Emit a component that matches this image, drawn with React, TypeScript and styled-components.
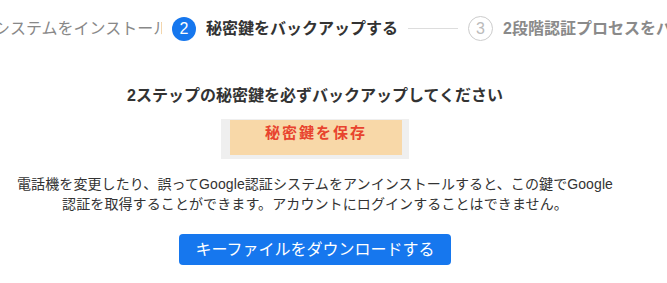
import React from "react";
import styled, { createGlobalStyle } from "styled-components";

const GlobalStyle = createGlobalStyle`
  html, body {
    margin: 0;
    padding: 0;
    background: #ffffff;
  }
  body {
    font-family: "Liberation Sans", "Noto Sans CJK JP", sans-serif;
    color: #333333;
  }
`;

const Page = styled.div`
  width: 667px;
  height: 283px;
  overflow: hidden;
  display: flex;
  flex-direction: column;
`;

const Stepper = styled.div`
  width: 100%;
  overflow: hidden;
  padding-top: 16px;
`;

const Track = styled.div<{ $offset: number }>`
  display: flex;
  align-items: center;
  gap: 10px;
  margin-left: ${(p) => -p.$offset}px;
  white-space: nowrap;
`;

const Step = styled.div`
  display: flex;
  align-items: center;
  gap: 10px;
  flex-shrink: 0;
`;

const Circle = styled.div<{ $state: "done" | "active" | "todo" }>`
  box-sizing: border-box;
  width: ${(p) => (p.$state === "todo" ? 25 : 24)}px;
  height: ${(p) => (p.$state === "todo" ? 25 : 24)}px;
  border-radius: 50%;
  display: flex;
  align-items: center;
  justify-content: center;
  font-size: 16px;
  line-height: 1;
  flex-shrink: 0;
  background: ${(p) => (p.$state === "active" ? "#1677ee" : "#ffffff")};
  color: ${(p) => (p.$state === "active" ? "#ffffff" : "#bbbbbb")};
  border: ${(p) => (p.$state === "active" ? "none" : "1px solid #cccccc")};
`;

const Label = styled.div<{ $state: "done" | "active" | "todo"; $clip?: number }>`
  font-size: 16px;
  line-height: 24px;
  white-space: nowrap;
  overflow: hidden;
  ${(p) => (p.$clip ? `width: ${p.$clip}px;` : "")}
  font-weight: ${(p) => (p.$state === "done" ? 400 : 700)};
  color: ${(p) =>
    p.$state === "active" ? "#333333" : p.$state === "done" ? "#888888" : "#8a8a8a"};
`;

const Connector = styled.div`
  width: 50px;
  height: 1px;
  background: #dddddd;
  flex-shrink: 0;
`;

const Content = styled.div`
  width: 630px;
  display: flex;
  flex-direction: column;
  align-items: center;
  text-align: center;
  margin-top: 43px;
`;

const Title = styled.div`
  font-size: 16px;
  line-height: 24px;
  font-weight: 700;
  color: #333333;
`;

const KeyFrame = styled.div`
  margin-top: 11px;
  width: 188px;
  height: 40px;
  box-sizing: border-box;
  background: #efefef;
  padding: 1px 7px 4px 9px;
  display: flex;
`;

const KeyCard = styled.div`
  flex: 1;
  background: #f8d8a8;
  display: flex;
  justify-content: center;
  align-items: flex-start;
  padding-top: 3px;
  box-sizing: border-box;
`;

const KeyText = styled.span`
  font-size: 15px;
  line-height: 20px;
  font-weight: 700;
  letter-spacing: 2px;
  color: #e8432e;
`;

const Description = styled.p`
  margin: 15px 0 0;
  font-size: 14px;
  line-height: 20px;
  letter-spacing: 0.1px;
  color: #333333;
`;

const DownloadButton = styled.button`
  margin-top: 20px;
  height: 31px;
  padding: 0 16px;
  border: none;
  border-radius: 4px;
  background: #1677ee;
  color: #ffffff;
  font-family: "Liberation Sans", "Noto Sans CJK JP", sans-serif;
  font-size: 16px;
  line-height: 31px;
  cursor: pointer;
`;

export default function App() {
  return (
    <>
      <GlobalStyle />
      <Page>
        <Stepper>
          <Track $offset={40}>
            <Step>
              <Circle $state="done">1</Circle>
              <Label $state="done" $clip={168}>
                システムをインストール
              </Label>
            </Step>
            <Step>
              <Circle $state="active">2</Circle>
              <Label $state="active">秘密鍵をバックアップする</Label>
            </Step>
            <Connector />
            <Step>
              <Circle $state="todo">3</Circle>
              <Label $state="todo">2段階認証プロセスをバインドする</Label>
            </Step>
          </Track>
        </Stepper>
        <Content>
          <Title>2ステップの秘密鍵を必ずバックアップしてください</Title>
          <KeyFrame>
            <KeyCard>
              <KeyText>秘密鍵を保存</KeyText>
            </KeyCard>
          </KeyFrame>
          <Description>
            電話機を変更したり、誤ってGoogle認証システムをアンインストールすると、この鍵でGoogle
            <br />
            認証を取得することができます。アカウントにログインすることはできません。
          </Description>
          <DownloadButton>キーファイルをダウンロードする</DownloadButton>
        </Content>
      </Page>
    </>
  );
}
